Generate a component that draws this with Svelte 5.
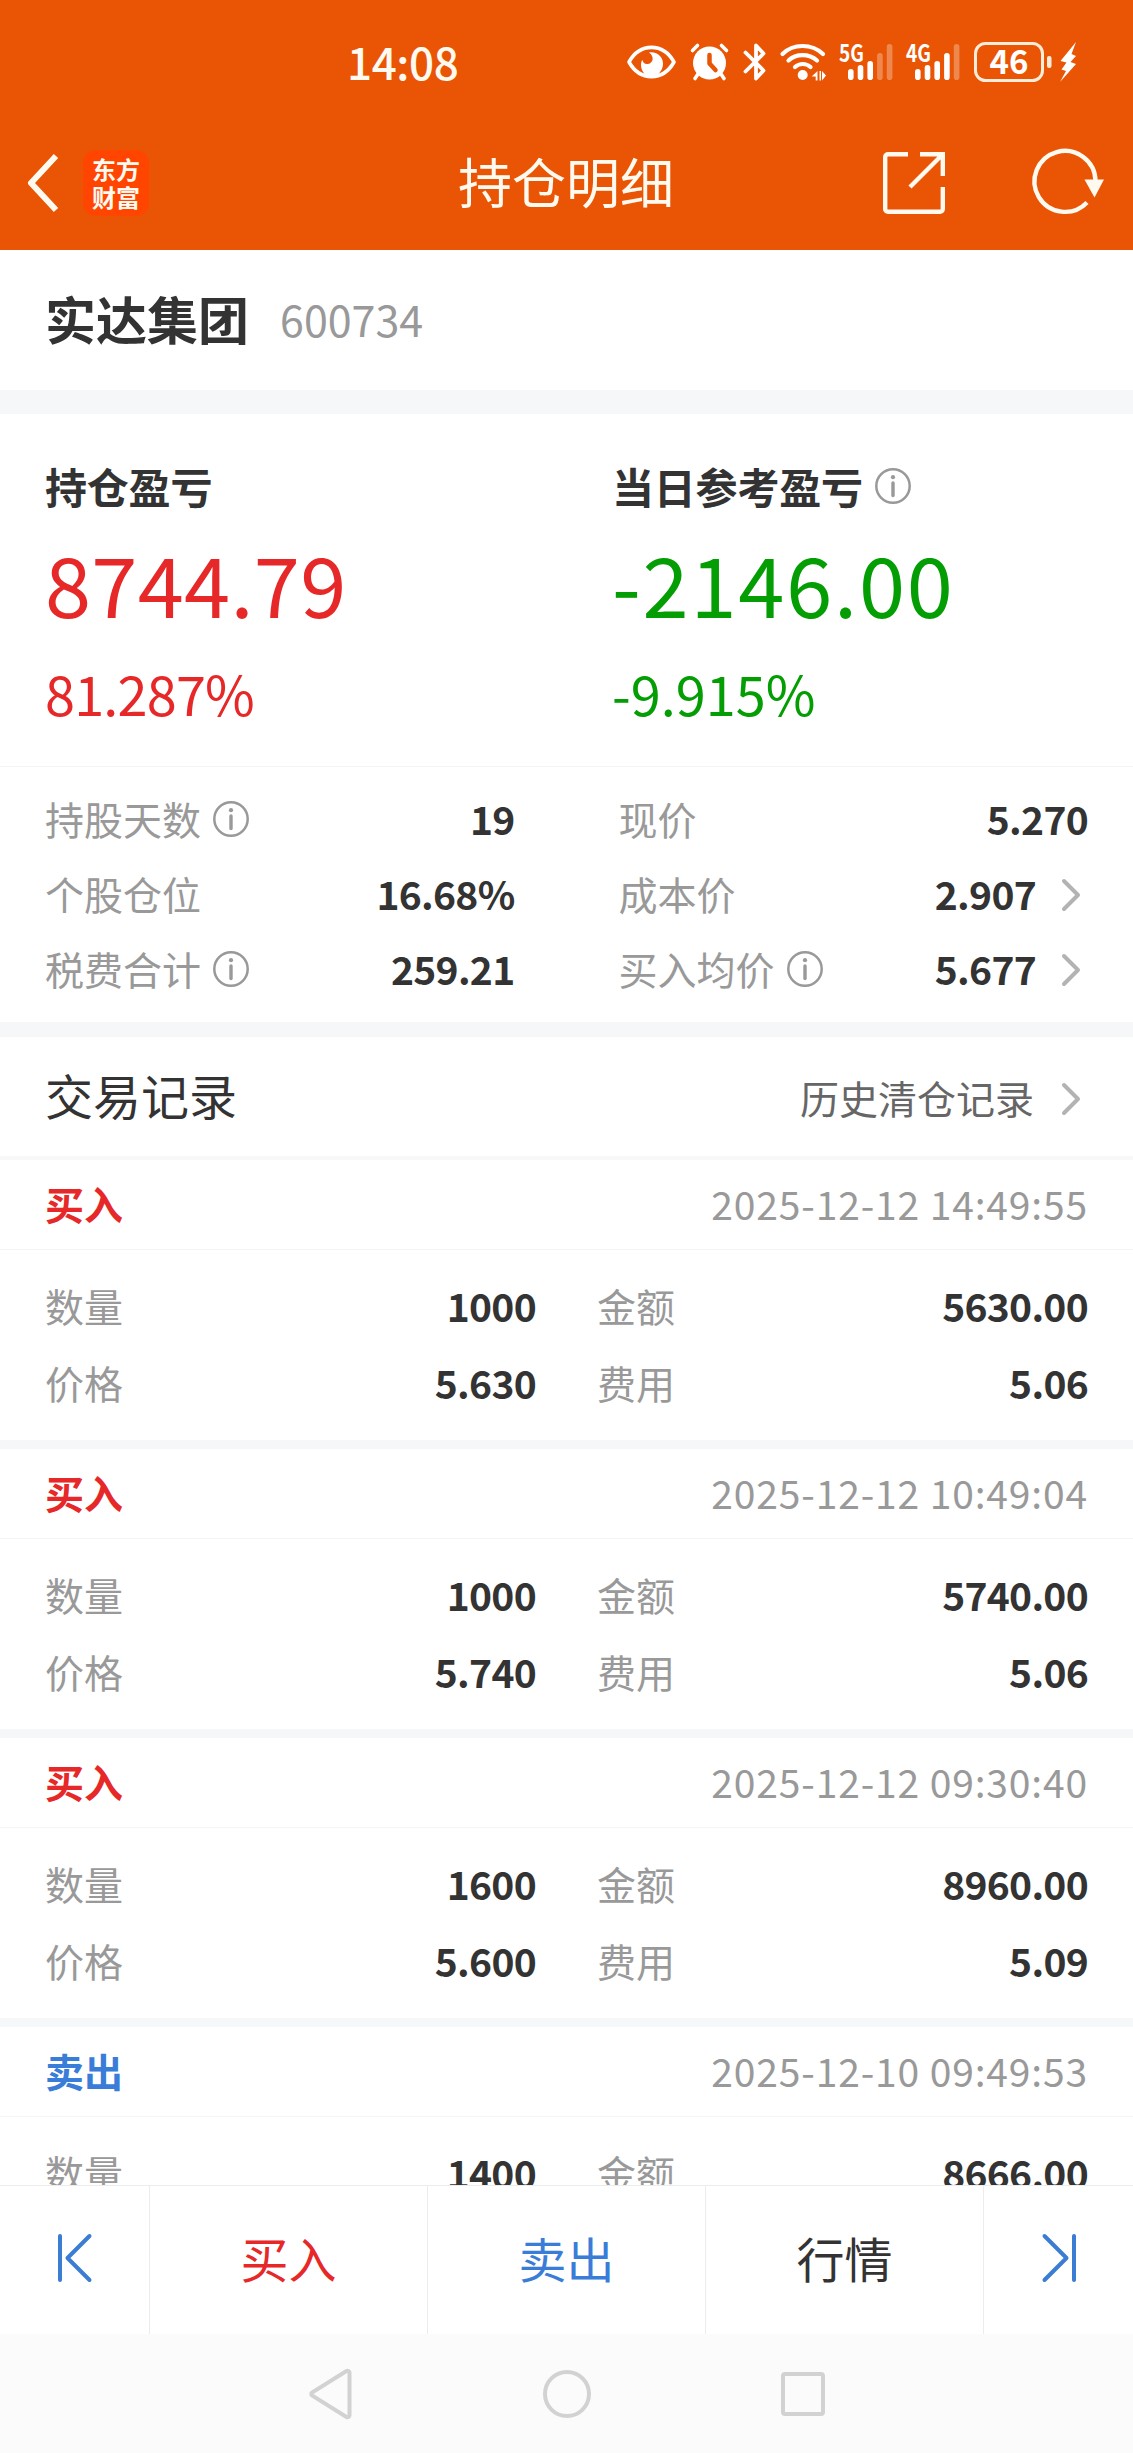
<script>
  const summary = [
    { title: '持仓盈亏', value: '8744.79', rate: '81.287%', tone: 'red', info: false },
    { title: '当日参考盈亏', value: '-2146.00', rate: '-9.915%', tone: 'green', info: true },
  ];

  const metrics = [
    { label: '持股天数', value: '19', info: true },
    { label: '现价', value: '5.270' },
    { label: '个股仓位', value: '16.68%' },
    { label: '成本价', value: '2.907', link: true },
    { label: '税费合计', value: '259.21', info: true },
    { label: '买入均价', value: '5.677', info: true, link: true },
  ];

  const records = [
    { type: '买入', time: '2025-12-12 14:49:55', count: '1000', amount: '5630.00', price: '5.630', fee: '5.06' },
    { type: '买入', time: '2025-12-12 10:49:04', count: '1000', amount: '5740.00', price: '5.740', fee: '5.06' },
    { type: '买入', time: '2025-12-12 09:30:40', count: '1600', amount: '8960.00', price: '5.600', fee: '5.09' },
    { type: '卖出', time: '2025-12-10 09:49:53', count: '1400', amount: '8666.00' },
  ];

  const networks = [
    { name: '5G', level: 3 },
    { name: '4G', level: 4 },
  ];
</script>

{#snippet infoIcon()}
  <svg class="info" width="36" height="36" viewBox="0 0 36 36">
    <circle cx="18" cy="18" r="16.7" fill="none" stroke="#999" stroke-width="2.5" />
    <circle cx="18" cy="9.2" r="2.1" fill="#999" />
    <path d="M18 15v12.5" stroke="#999" stroke-width="3.4" stroke-linecap="round" />
  </svg>
{/snippet}

{#snippet chevron()}
  <svg class="chevron" width="20" height="34" viewBox="0 0 20 34">
    <path d="M3 3l14 14L3 31" fill="none" stroke="#b3b3b3" stroke-width="4" stroke-linecap="round" stroke-linejoin="round" />
  </svg>
{/snippet}

<div class="app">
  <header>
    <div class="status">
      <span class="clock">14:08</span>
      <div class="status-icons">
        <svg width="49" height="40" viewBox="0 0 49 40">
          <path d="M2 20C13 .5 36 .5 47 20C36 39.5 13 39.5 2 20z" fill="none" stroke="#fff" stroke-width="3.6" stroke-linejoin="round" />
          <path d="M22 10.500C30 9 36 15 36 21.500C36 27 33 30.500 30 33.500H19C16 31 14 27 14 23C14 20.500 14.500 19 15.500 18C16 21 18 22.500 21 22C26.500 21 27.500 14.500 22 10.500z" fill="#fff" />
        </svg>
        <svg width="39" height="40" viewBox="0 0 39 40">
          <circle cx="19.5" cy="21" r="16.5" fill="#fff" />
          <path d="M2.5 8.500l5-5M36.500 8.500l-5-5M8 32l-3 4.500M31 32l3 4.500" stroke="#fff" stroke-width="3.6" stroke-linecap="round" />
          <path d="M19.5 13v8.500l6 6.500" fill="none" stroke="#e95504" stroke-width="4.5" stroke-linecap="round" stroke-linejoin="round" />
        </svg>
        <svg width="23" height="40" viewBox="0 0 23 40">
          <path d="M2.5 10.500L20.500 28.500l-7.500 8V3.500L20.500 11.500L2.500 29.500" fill="none" stroke="#fff" stroke-width="3.8" stroke-linecap="round" stroke-linejoin="round" />
        </svg>
        <svg width="46" height="40" viewBox="0 0 46 40">
          <g fill="none" stroke="#fff" stroke-width="4.2" stroke-linecap="round">
            <path d="M2.5 12C13 1.300 32 1.300 43 12" />
            <path d="M8.5 18.500C16 11.300 29 11.300 37 18.500" />
            <path d="M15 25c4.500-4 11-4 15.500 0" />
          </g>
          <circle cx="22.7" cy="33" r="5" fill="#fff" />
          <path d="M37.500 29v9.500h-1.800v-4h-4zM39.500 29v9.500h1.500v-9.500zM42 29v9.500l4-5z" fill="#fff" />
        </svg>
        {#each networks as net}
          <svg width="53" height="40" viewBox="0 0 53 40">
            <text x="-1" y="19.5" font-size="24" font-weight="700" textLength="25" lengthAdjust="spacingAndGlyphs" fill="#fff">{net.name}</text>
            {#each [11, 15, 19, 27, 36] as h, i}
              <rect x={8 + i * 9.7} y={38 - h} width="5.6" height={h} rx="2.8" fill="#fff" opacity={i < net.level ? 1 : 0.3} />
            {/each}
          </svg>
        {/each}
        <svg width="102" height="40" viewBox="0 0 102 40">
          <rect x="1.5" y="1.5" width="67" height="37" rx="10" fill="none" stroke="#ffedd9" stroke-width="3" />
          <text x="35" y="32" font-size="33" font-weight="700" text-anchor="middle" fill="#fff">46</text>
          <rect x="73" y="14" width="4.5" height="12" rx="2" fill="#ffedd9" />
          <path d="M102 0L86.500 19l6 1.500-5 7 4.500 1.500L86 40l16-18-5.500-2 5.500-6-4.500-2z" fill="#fff" />
        </svg>
      </div>
    </div>

    <nav>
      <svg class="back" width="34" height="58" viewBox="0 0 34 58">
        <path d="M30 2L5 29l25 27" fill="none" stroke="#fffaf0" stroke-width="6" stroke-linejoin="round" />
      </svg>
      <div class="logo"><span>东方</span><span>财富</span></div>
      <h1>持仓明细</h1>
      <svg class="share" width="62" height="62" viewBox="0 0 62 62">
        <path d="M25 2.200H5a2.800 2.800 0 0 0-2.800 2.800v52a2.800 2.800 0 0 0 2.800 2.800h52a2.800 2.800 0 0 0 2.800-2.800V35M37 2.200h22.800V24M59 3L27 35" fill="none" stroke="#fffaf0" stroke-width="4.400" />
      </svg>
      <svg width="72" height="66" viewBox="0 0 72 66">
        <path d="M54 52.500A30.500 30.500 0 1 1 62.500 31" fill="none" stroke="#fffaf0" stroke-width="4.400" />
        <path d="M51.500 29.500h19.500L61.500 47.500z" fill="#fffaf0" />
      </svg>
    </nav>
  </header>

  <main>
    <section class="stock">
      <h2>实达集团</h2>
      <span>600734</span>
    </section>

    <section class="summary">
      {#each summary as item}
        <div class={item.tone}>
          <div class="title">{item.title}{#if item.info}{@render infoIcon()}{/if}</div>
          <div class="value">{item.value}</div>
          <div class="rate">{item.rate}</div>
        </div>
      {/each}
    </section>

    <section class="metrics">
      {#each metrics as m}
        <div class="pair">
          <span class="label">{m.label}</span>
          {#if m.info}{@render infoIcon()}{/if}
          <b>{m.value}</b>
          {#if m.link}{@render chevron()}{/if}
        </div>
      {/each}
    </section>

    <section class="records-head">
      <h3>交易记录</h3>
      <span>历史清仓记录</span>
      {@render chevron()}
    </section>

    {#each records as r}
      <article>
        <div class="record-top">
          <strong class:red={r.type === '买入'} class:blue={r.type === '卖出'}>{r.type}</strong>
          <time>{r.time}</time>
        </div>
        <div class="record-body">
          <div class="pair"><span class="label">数量</span><b>{r.count}</b></div>
          <div class="pair"><span class="label">金额</span><b>{r.amount}</b></div>
          {#if r.price}
            <div class="pair"><span class="label">价格</span><b>{r.price}</b></div>
            <div class="pair"><span class="label">费用</span><b>{r.fee}</b></div>
          {/if}
        </div>
      </article>
    {/each}
  </main>

  <footer>
    <button aria-label="上一只">
      <svg width="34" height="48" viewBox="0 0 34 48">
        <path d="M2 2v44M31.500 2L9.500 24l22 22" fill="none" stroke="#3a7dd2" stroke-width="4" stroke-linecap="round" stroke-linejoin="round" />
      </svg>
    </button>
    <button class="red">买入</button>
    <button class="blue">卖出</button>
    <button>行情</button>
    <button aria-label="下一只">
      <svg width="34" height="48" viewBox="0 0 34 48">
        <path d="M32 2v44M2.500 2l22 22-22 22" fill="none" stroke="#3a7dd2" stroke-width="4" stroke-linecap="round" stroke-linejoin="round" />
      </svg>
    </button>
  </footer>

  <div class="system-nav">
    <svg width="48" height="50" viewBox="0 0 48 50">
      <path d="M42.500 3.500v43a2 2 0 0 1-3 1.500L5 26.500a2 2 0 0 1 0-3L39.500 2a2 2 0 0 1 3 1.500z" />
    </svg>
    <svg width="48" height="50" viewBox="0 0 48 50"><circle cx="24" cy="25" r="22" /></svg>
    <svg width="48" height="50" viewBox="0 0 48 50"><rect x="4" y="5" width="40" height="40" rx="2" /></svg>
  </div>
</div>

<style>
  .app {
    display: flex;
    flex-direction: column;
    width: 1133px;
    height: 2453px;
    overflow: hidden;
    background: #fff;
    color: #333;
    font-family: "Noto Sans CJK SC", sans-serif;
    font-size: 39px;
  }

  svg {
    display: block;
    flex: none;
    overflow: visible;
  }

  h1, h2, h3 {
    margin: 0;
  }

  .red {
    color: #e62828;
  }

  .green {
    color: #049e04;
  }

  .blue {
    color: #3a7dd8;
  }

  header {
    height: 250px;
    flex: none;
    background: #e95504;
    color: #fffaf0;
  }

  .status {
    display: flex;
    align-items: center;
    justify-content: space-between;
    box-sizing: border-box;
    height: 124px;
    padding: 0 57px 0 347px;
  }

  .clock {
    padding-bottom: 3px;
    font-size: 44px;
    font-weight: 500;
    letter-spacing: -0.4px;
  }

  .status-icons {
    display: flex;
    gap: 14px;
  }

  nav {
    display: flex;
    align-items: center;
    box-sizing: border-box;
    height: 118px;
    padding: 0 28px 0 26px;
  }

  .logo {
    display: flex;
    flex-direction: column;
    align-items: center;
    justify-content: center;
    width: 66px;
    height: 66px;
    margin-left: 23px;
    border-radius: 13px;
    background: #ff4500;
    font-size: 24px;
    font-weight: 700;
    line-height: 29px;
  }

  .logo span {
    margin-top: -1px;
  }

  h1 {
    flex: 1;
    padding: 0 0 5px 309px;
    font-size: 54px;
    font-weight: 400;
  }

  .share {
    margin-right: 88px;
  }

  .stock {
    display: flex;
    align-items: center;
    box-sizing: border-box;
    height: 164px;
    padding: 0 45px 4px;
    border-bottom: 24px solid #f6f7f9;
  }

  .stock h2 {
    font-size: 51px;
  }

  .stock span {
    margin-left: 31px;
    color: #999;
    font-size: 43px;
  }

  .summary {
    display: grid;
    grid-template-columns: 567px 1fr;
    box-sizing: border-box;
    height: 353px;
    padding: 41px 45px 0;
    border-bottom: 1px solid #f5f5f5;
  }

  .title {
    display: flex;
    align-items: center;
    height: 60px;
    color: #333;
    font-size: 42px;
    font-weight: 700;
    letter-spacing: -0.2px;
  }

  .title .info {
    margin: 2px 0 0 12px;
  }

  .value {
    height: 121px;
    font-size: 83px;
    letter-spacing: 0.3px;
    line-height: 134px;
  }

  .rate {
    font-size: 54px;
    line-height: 113px;
    letter-spacing: -0.8px;
  }

  .green .value {
    letter-spacing: 1.8px;
  }

  .green .rate {
    letter-spacing: 0;
  }

  .metrics {
    display: grid;
    grid-template-columns: 1fr 1fr;
    column-gap: 104px;
    align-content: start;
    box-sizing: border-box;
    height: 270px;
    padding: 16px 45px 0;
    border-bottom: 15px solid #f6f7f9;
  }

  .pair {
    display: flex;
    align-items: center;
    height: 75px;
  }

  .label {
    padding-bottom: 5px;
    color: #999;
    line-height: 70px;
  }

  .pair .info {
    margin-left: 12px;
    margin-bottom: 3px;
  }

  .pair b {
    margin-left: auto;
    padding-bottom: 4px;
    letter-spacing: -0.7px;
    line-height: 71px;
  }

  .pair .chevron {
    margin: 0 7px 2px 25px;
  }

  .records-head {
    display: flex;
    align-items: center;
    box-sizing: border-box;
    height: 123px;
    padding: 0 52px 0 45px;
    border-bottom: 4px solid #f8f8f9;
  }

  h3 {
    padding-bottom: 5px;
    font-size: 48px;
    font-weight: 400;
  }

  .records-head span {
    margin-left: auto;
    color: #666;
  }

  .records-head .chevron {
    margin: 4px 0 0 27px;
  }

  main {
    flex: 1;
    min-height: 0;
    overflow: hidden;
  }

  article {
    height: 280px;
    border-bottom: 9px solid #f6f7f9;
  }

  .record-top {
    display: flex;
    align-items: center;
    justify-content: space-between;
    height: 89px;
    padding: 0 45px;
    border-bottom: 1px solid #f5f5f5;
  }

  .record-top strong,
  time {
    padding-bottom: 3px;
  }

  time {
    color: #999;
    letter-spacing: 0.85px;
  }

  .record-body {
    display: grid;
    grid-template-columns: 1fr 1fr;
    column-gap: 61px;
    padding: 19px 45px 0;
  }

  .record-body .pair {
    height: 77px;
  }

  footer {
    display: flex;
    flex: none;
    height: 148px;
    border-top: 1px solid #ececec;
  }

  button {
    display: flex;
    align-items: center;
    justify-content: center;
    flex: 1;
    padding: 0 0 7px;
    border: 0;
    border-right: 1px solid #ececec;
    background: #fff;
    color: #333;
    font-family: inherit;
    font-size: 48px;
  }

  button.red {
    color: #e62828;
  }

  button.blue {
    color: #3a7dd8;
  }

  button:first-child,
  button:last-child {
    flex: 0 0 150px;
    box-sizing: border-box;
    padding-bottom: 5px;
  }

  button:last-child {
    flex-basis: 149px;
    border-right: 0;
  }

  .system-nav {
    display: flex;
    align-items: center;
    justify-content: center;
    gap: 188px;
    flex: none;
    height: 119px;
    background: #fbfbfb;
  }

  .system-nav path,
  .system-nav circle,
  .system-nav rect {
    fill: none;
    stroke: #d2d2d2;
    stroke-width: 4;
  }
</style>
